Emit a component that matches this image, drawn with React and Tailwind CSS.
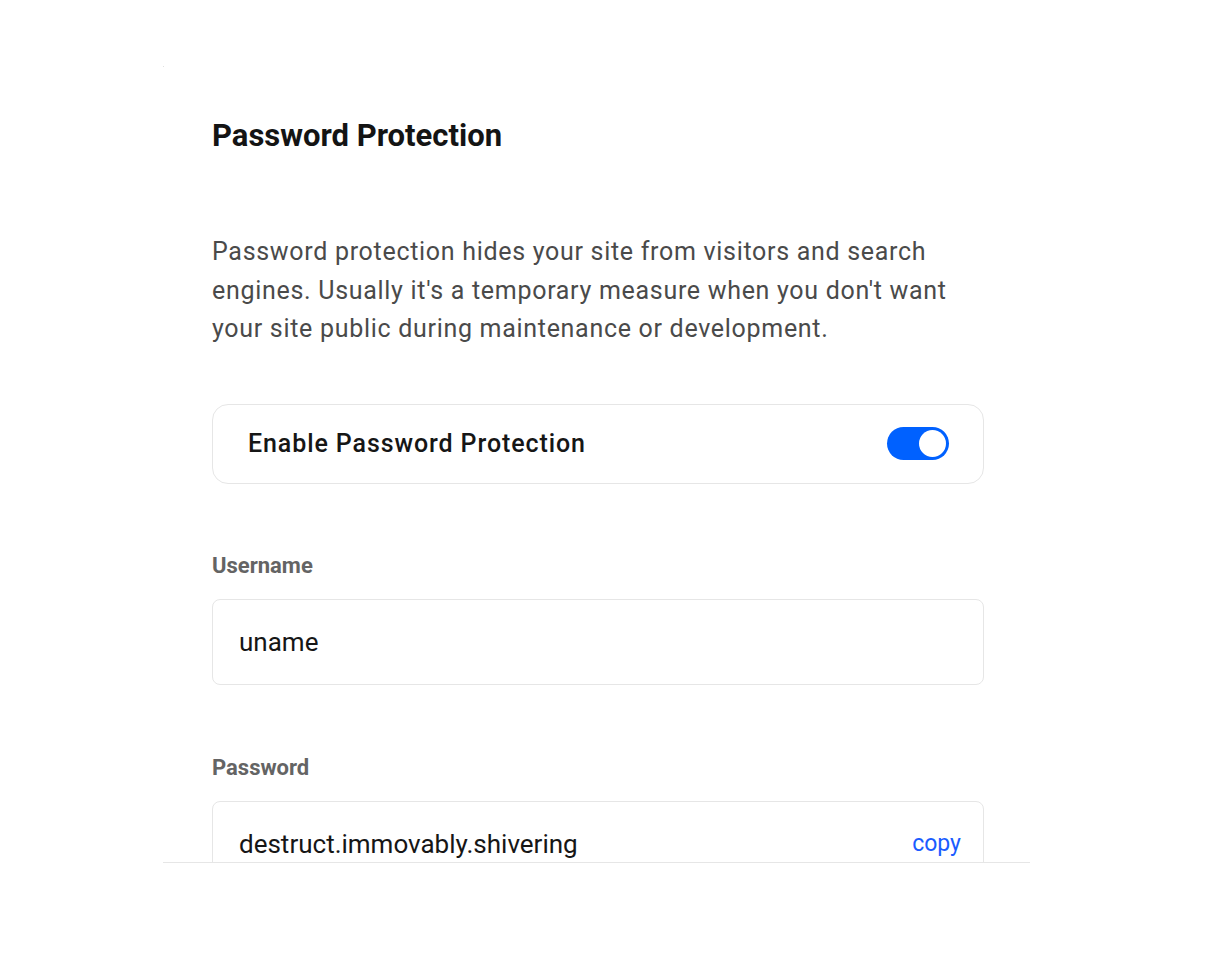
import React, { useState } from 'react';

const font = { fontFamily: 'Roboto, "Noto Sans", sans-serif' };

const Field = ({ label, value, action, top }) => (
  <div className={top}>
    <div className="text-[22px] font-bold text-[#646464] leading-[28px]">{label}</div>
    <div className="mt-[19px] h-[86px] rounded-[8px] border border-[#e6e6e6] px-[26px] pt-[1px] flex items-center justify-between">
      <span className="text-[26px] text-[#161616]">{value}</span>
      {action && <button className="text-[23px] text-[#1a5cff] mr-[-4px]">{action}</button>}
    </div>
  </div>
);

const App = () => {
  const [enabled, setEnabled] = useState(true);

  return (
    <div className="min-h-screen bg-white pt-[66px] pl-[163px]" style={font}>
      <div className="w-[867px] h-[797px] overflow-hidden border-b border-[#e6e6e6] relative">
        <div className="absolute left-0 top-0 w-px h-px bg-[#e0e0e0]"></div>
        <div className="pl-[49px] pr-[46px] pt-[50px]">
          <h1 className="text-[31px] font-bold text-[#141414] leading-[40px]">Password Protection</h1>

          <p className="mt-[77px] text-[25px] leading-[38.5px] text-[#4a4a4a] tracking-[0.7px] max-w-[760px]">
            Password protection hides your site from visitors and search engines. Usually it's a temporary measure when you don't want your site public during maintenance or development.
          </p>

          <div className="mt-[55px] h-[80px] rounded-[16px] border border-[#e6e6e6] pl-[35px] pr-[34px] flex items-center justify-between">
            <span className="text-[25px] font-medium text-[#161616] tracking-[0.9px]">Enable Password Protection</span>
            <button
              onClick={() => setEnabled(!enabled)}
              className={`w-[62px] h-[33px] rounded-full flex items-center px-[3px] ${enabled ? 'bg-[#0061ff] justify-end' : 'bg-[#d4d4d4] justify-start'}`}
            >
              <span className="w-[27px] h-[27px] rounded-full bg-white block"></span>
            </button>
          </div>

          <Field top="mt-[68px]" label="Username" value="uname" />
          <Field top="mt-[69px]" label="Password" value="destruct.immovably.shivering" action="copy" />
        </div>
      </div>
    </div>
  );
};

export default App;
